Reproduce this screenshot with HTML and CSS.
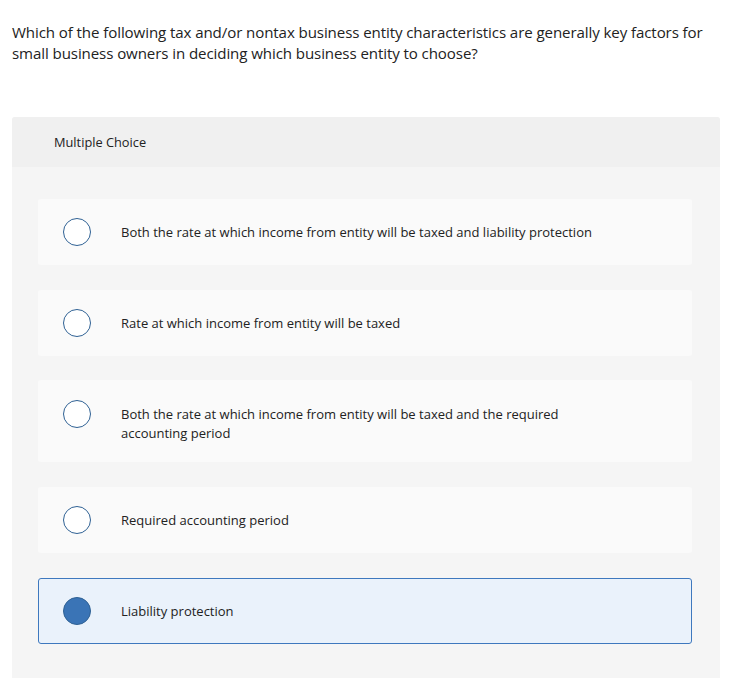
FILE: index.html
```html
<!DOCTYPE html>
<html>
<head>
<meta charset="utf-8">
<link rel="stylesheet" href="styles.css">
</head>
<body>
<div class="page">
  <p class="question">Which of the following tax and/or nontax business entity characteristics are generally key factors for small business owners in deciding which business entity to choose?</p>
  <div class="panel">
    <div class="panel-head">Multiple Choice</div>
    <div class="options">
      <div class="option"><span class="radio"></span><span class="label">Both the rate at which income from entity will be taxed and liability protection</span></div>
      <div class="option"><span class="radio"></span><span class="label">Rate at which income from entity will be taxed</span></div>
      <div class="option tall"><span class="radio"></span><span class="label">Both the rate at which income from entity will be taxed and the required accounting period</span></div>
      <div class="option"><span class="radio"></span><span class="label">Required accounting period</span></div>
      <div class="option selected"><span class="radio"></span><span class="label">Liability protection</span></div>
    </div>
  </div>
</div>
</body>
</html>
```

FILE: styles.css
```css
html, body {
  margin: 0;
  padding: 0;
  background: #ffffff;
}
body {
  font-family: "Open Sans", "Liberation Sans", sans-serif;
  color: #222222;
}
.page {
  padding: 22px 12px 0 12px;
}
.question {
  margin: 0;
  font-size: 15.1px;
  line-height: 21px;
  color: #222;
  letter-spacing: -0.1px;
}
.panel {
  margin-top: 53px;
  background: #f5f5f5;
  border-radius: 3px 3px 0 0;
  padding-bottom: 40px;
}
.panel-head {
  height: 50px;
  background: #f0f0f0;
  border-radius: 3px 3px 0 0;
  padding-left: 42px;
  display: flex;
  align-items: center;
  font-size: 12.8px;
  color: #222;
}
.options {
  padding: 32px 28px 0 26px;
  display: flex;
  flex-direction: column;
  gap: 25px;
}
.option {
  height: 66px;
  box-sizing: border-box;
  background: #fafafa;
  border-radius: 3px;
  border: 1px solid transparent;
  display: flex;
  align-items: center;
  padding-left: 24px;
}
.option.tall {
  height: 82px;
  margin-top: -1px;
  align-items: flex-start;
  padding-top: 19px;
}
.option.tall .label {
  margin-top: 5px;
}
.option.selected {
  background: #eaf2fb;
  border-color: #3e78be;
}
.radio {
  width: 28px;
  height: 28px;
  box-sizing: border-box;
  border-radius: 50%;
  border: 1.5px solid #2f6194;
  background: #ffffff;
  flex: none;
}
.option.selected .radio {
  background: #3a74b6;
  border-color: #2f6194;
}
.label {
  margin-left: 30px;
  max-width: 490px;
  font-size: 13px;
  line-height: 19px;
  color: #222;
}
```
